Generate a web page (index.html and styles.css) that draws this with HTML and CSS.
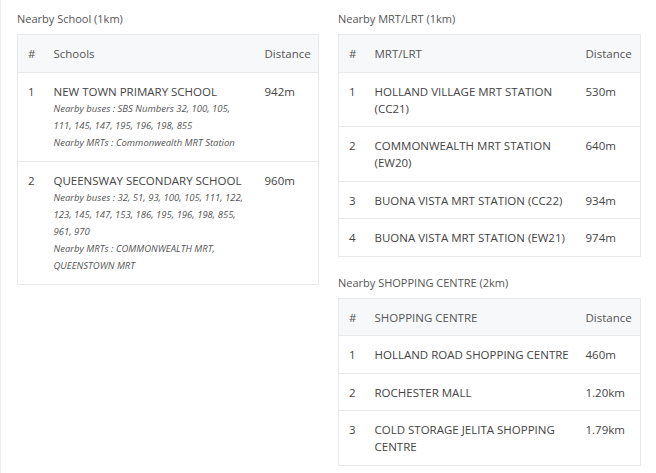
FILE: index.html
```html
<!DOCTYPE html>
<html>
<head>
<meta charset="utf-8">
<link rel="stylesheet" href="styles.css">
</head>
<body>
<div class="page">
  <section class="col">
    <h3 class="title">Nearby School (1km)</h3>
    <table class="tbl tbl-left">
      <colgroup><col class="c-num"><col class="c-name-l"><col class="c-dist-l"></colgroup>
      <thead><tr><th>#</th><th>Schools</th><th>Distance</th></tr></thead>
      <tbody>
        <tr>
          <td>1</td>
          <td class="name">NEW TOWN PRIMARY SCHOOL
            <div class="note">Nearby buses : SBS Numbers 32, 100, 105, 111, 145, 147, 195, 196, 198, 855</div>
            <div class="note">Nearby MRTs : Commonwealth MRT Station</div>
          </td>
          <td>942m</td>
        </tr>
        <tr>
          <td>2</td>
          <td class="name">QUEENSWAY SECONDARY SCHOOL
            <div class="note">Nearby buses : 32, 51, 93, 100, 105, 111, 122, 123, 145, 147, 153, 186, 195, 196, 198, 855, 961, 970</div>
            <div class="note">Nearby MRTs : COMMONWEALTH MRT, QUEENSTOWN MRT</div>
          </td>
          <td>960m</td>
        </tr>
      </tbody>
    </table>
  </section>
  <section class="col">
    <h3 class="title">Nearby MRT/LRT (1km)</h3>
    <table class="tbl tbl-right">
      <colgroup><col class="c-num"><col class="c-name-r"><col class="c-dist-r"></colgroup>
      <thead><tr><th>#</th><th>MRT/LRT</th><th>Distance</th></tr></thead>
      <tbody>
        <tr><td>1</td><td class="name">HOLLAND VILLAGE MRT STATION (CC21)</td><td>530m</td></tr>
        <tr><td>2</td><td class="name">COMMONWEALTH MRT STATION (EW20)</td><td>640m</td></tr>
        <tr><td>3</td><td class="name">BUONA VISTA MRT STATION (CC22)</td><td>934m</td></tr>
        <tr><td>4</td><td class="name">BUONA VISTA MRT STATION (EW21)</td><td>974m</td></tr>
      </tbody>
    </table>
    <h3 class="title title-gap">Nearby SHOPPING CENTRE (2km)</h3>
    <table class="tbl tbl-right">
      <colgroup><col class="c-num"><col class="c-name-r"><col class="c-dist-r"></colgroup>
      <thead><tr><th>#</th><th>SHOPPING CENTRE</th><th>Distance</th></tr></thead>
      <tbody>
        <tr><td>1</td><td class="name">HOLLAND ROAD SHOPPING CENTRE</td><td>460m</td></tr>
        <tr><td>2</td><td class="name">ROCHESTER MALL</td><td>1.20km</td></tr>
        <tr><td>3</td><td class="name">COLD STORAGE JELITA SHOPPING CENTRE</td><td>1.79km</td></tr>
      </tbody>
    </table>
  </section>
</div>
</body>
</html>
```
FILE: styles.css
```css
* { box-sizing: border-box; }
html, body { margin: 0; padding: 0; background: #fff; }
body {
  font-family: "Open Sans", "Noto Sans", sans-serif;
  font-size: 11.5px;
  color: #4a4a4a;
  border-left: 1px solid #eeeeee;
  min-height: 473px;
}
.page {
  display: flex;
  gap: 20px;
  padding: 10px 16px 0 16px;
  align-items: flex-start;
}
.col { display: flex; flex-direction: column; }
.col:first-child { width: 301px; }
.col:last-child { width: 302px; }
.title {
  margin: 0 0 6px 0;
  font-size: 11px;
  font-weight: normal;
  line-height: 18px;
  color: #555;
}
.title-gap { margin-top: 17px; }
.tbl {
  width: 100%;
  border-collapse: collapse;
  table-layout: fixed;
  border: 1px solid #e7e9ec;
}
.tbl th, .tbl td {
  text-align: left;
  vertical-align: top;
  padding: 10px 10px 9.5px 10px;
  line-height: 17px;
  font-weight: normal;
}
.tbl th {
  background: #f7f8fa;
  color: #555;
}
.tbl tbody tr { border-top: 1px solid #e7e9ec; }
.tbl td { color: #444; }
.tbl-right td.name { padding-right: 2px; }
.tbl-left td.name { padding-right: 10px; }
.c-num { width: 26px; }
.c-name-l { width: 211px; }
.c-dist-l { width: 64px; }
.c-name-r { width: 211px; }
.c-dist-r { width: 65px; }
.note {
  font-size: 9.5px;
  font-style: italic;
  line-height: 17.2px;
  color: #555;
}
```
